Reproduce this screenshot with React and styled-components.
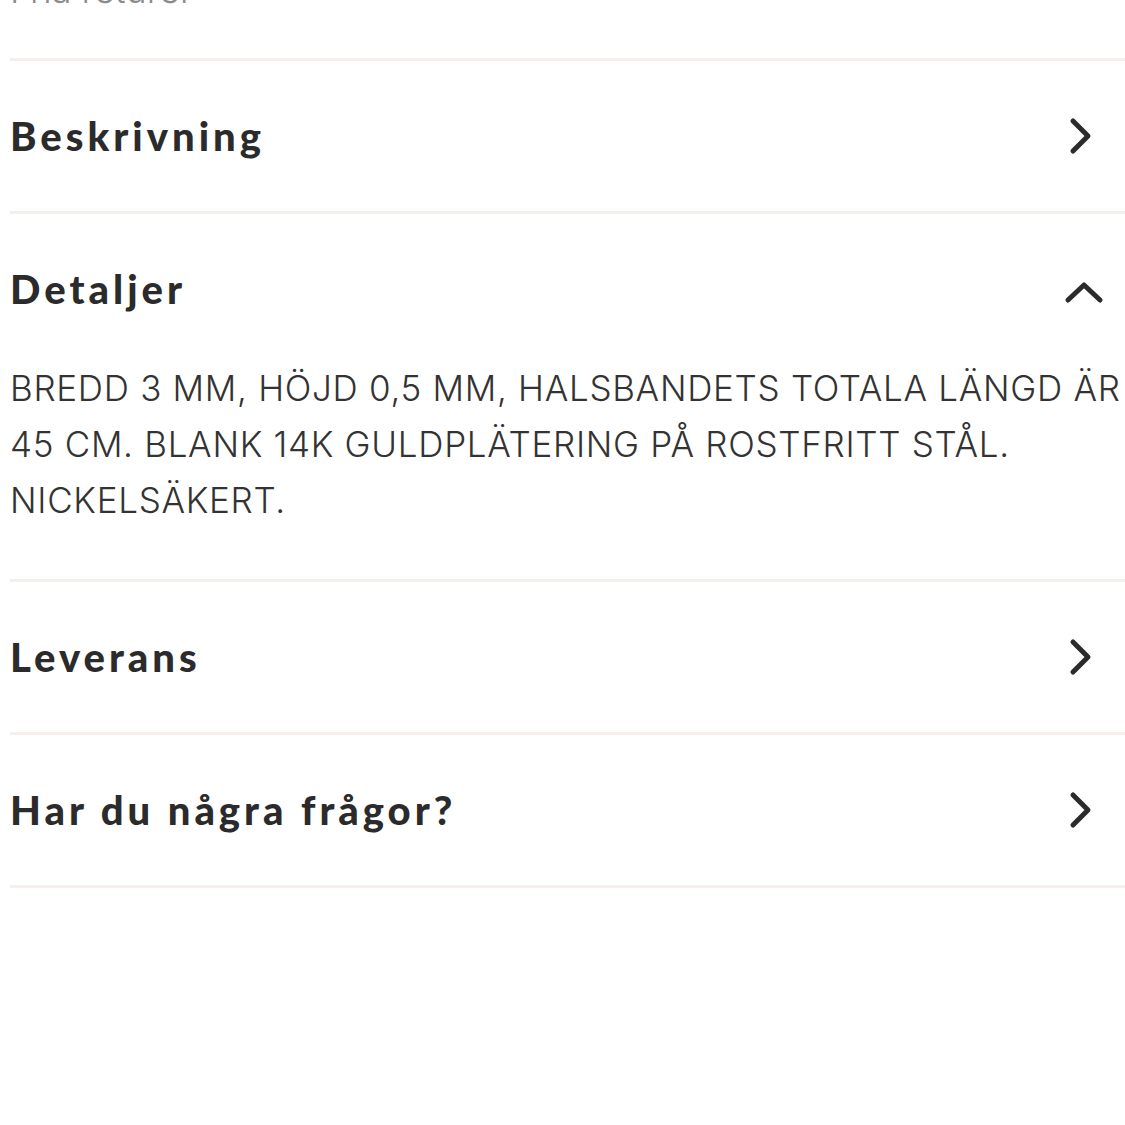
import React, { useState } from "react";
import styled, { createGlobalStyle } from "styled-components";

const GlobalStyle = createGlobalStyle`
  html, body {
    margin: 0;
    padding: 0;
    background: #ffffff;
  }
  body {
    overflow: hidden;
  }
`;

const sections = [
  { id: "beskrivning", title: "Beskrivning", body: null },
  {
    id: "detaljer",
    title: "Detaljer",
    body: "BREDD 3 MM, HÖJD 0,5 MM, HALSBANDETS TOTALA LÄNGD ÄR 45 CM. BLANK 14K GULDPLÄTERING PÅ ROSTFRITT STÅL. NICKELSÄKERT.",
  },
  { id: "leverans", title: "Leverans", body: null },
  { id: "fragor", title: "Har du några frågor?", body: null },
];

function ChevronRight() {
  return (
    <svg width="26" height="40" viewBox="0 0 26 40" fill="none">
      <polyline
        points="5,5 20,20 5,35"
        stroke="#2b2b2b"
        strokeWidth="5"
        strokeLinecap="round"
        strokeLinejoin="round"
      />
    </svg>
  );
}

function ChevronUp() {
  return (
    <svg width="42" height="28" viewBox="0 0 42 28" fill="none">
      <polyline
        points="5,21 21,6 37,21"
        stroke="#2b2b2b"
        strokeWidth="5"
        strokeLinecap="round"
        strokeLinejoin="round"
      />
    </svg>
  );
}

function App() {
  const [open, setOpen] = useState("detaljer");

  return (
    <Page>
      <GlobalStyle />
      <Intro>Fria returer</Intro>
      <List>
        {sections.map((s) => {
          const isOpen = open === s.id;
          return (
            <Item key={s.id}>
              <Header onClick={() => setOpen(isOpen ? null : s.id)}>
                <Title>{s.title}</Title>
                <IconSlot $open={isOpen}>
                  {isOpen ? <ChevronUp /> : <ChevronRight />}
                </IconSlot>
              </Header>
              {isOpen && s.body && <Body>{s.body}</Body>}
            </Item>
          );
        })}
      </List>
    </Page>
  );
}

export default App;

const Page = styled.div`
  padding-left: 10px;
  width: 1115px;
`;

const Intro = styled.p`
  margin: -38px 0 0;
  padding-bottom: 40px;
  font-family: "Inter", "Liberation Sans", sans-serif;
  font-weight: 300;
  font-size: 36px;
  line-height: 56px;
  color: #8a8a8a;
`;

const List = styled.div`
  display: flex;
  flex-direction: column;
  border-bottom: 3px solid #f6efee;
`;

const Item = styled.div`
  border-top: 3px solid #f6efee;
`;

const Header = styled.button`
  display: flex;
  align-items: center;
  justify-content: space-between;
  width: 100%;
  height: 150px;
  padding: 0;
  border: none;
  background: transparent;
  cursor: pointer;
  text-align: left;
`;

const Title = styled.span`
  font-family: "Lato", "Liberation Sans", sans-serif;
  font-weight: 900;
  font-size: 40px;
  letter-spacing: 0.1em;
  color: #2b2b2b;
`;

const IconSlot = styled.span`
  display: flex;
  align-items: center;
  margin-right: ${(p) => (p.$open ? "20px" : "31px")};
  margin-top: ${(p) => (p.$open ? "8px" : "0")};
`;

const Body = styled.p`
  margin: -4px 0 0;
  padding-bottom: 51px;
  font-family: "Inter", "Liberation Sans", sans-serif;
  font-weight: 300;
  font-size: 35px;
  letter-spacing: 0.02em;
  line-height: 56px;
  color: #333333;
`;
